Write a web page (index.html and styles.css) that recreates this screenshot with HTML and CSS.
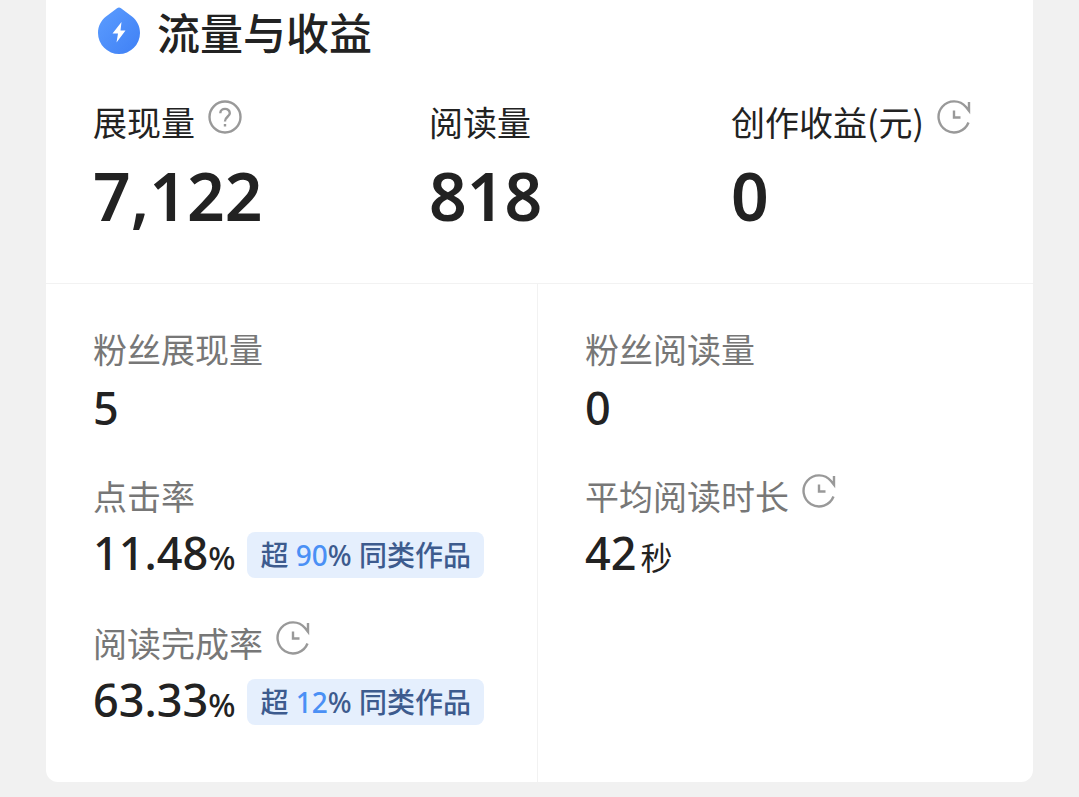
FILE: index.html
```html
<!DOCTYPE html>
<html lang="zh-CN">
<head>
    <meta charset="UTF-8">
    <meta name="viewport" content="width=device-width, initial-scale=1.0">
    <title>流量与收益</title>
    <link rel="stylesheet" href="styles.css">
</head>
<body>

<!-- shared icons -->
<svg class="sprite" aria-hidden="true">
    <symbol id="clock" viewBox="0 0 34 34">
        <path d="M31.500 22.500A15.500 15.500 0 1 1 29 7L32 10.800V2M17 10.500V17.500H23.500"/>
    </symbol>
    <symbol id="help" viewBox="0 0 34 34">
        <circle cx="17" cy="17" r="15.500"/>
        <path d="M12.300 13.200C12.300 7.500 21.800 7.400 21.800 13.200C21.800 16.600 17 16.500 17 21.500M17 24V26.500"/>
    </symbol>
</svg>

<main class="card">
    <h1 class="title">
        <svg class="logo" viewBox="0 0 42 48" aria-hidden="true">
            <defs>
                <linearGradient id="drop" x1="0" y1="0" x2="1" y2="1">
                    <stop offset="0" stop-color="#5c9dff"/>
                    <stop offset="1" stop-color="#3f80f5"/>
                </linearGradient>
            </defs>
            <path fill="url(#drop)" d="M19 1.200Q21 -.4 23 1.200L34 9.500C39 13.500 42 19 42 26A21 21 0 0 1 0 26C0 19 3 13.500 8 9.500Z"/>
            <path fill="#fff" d="M23.500 15L14.500 26.500H20L18.500 35.500L27.500 23.500H22.500Z"/>
        </svg>
        流量与收益
    </h1>

    <!-- totals -->
    <section class="totals">
        <div class="total">
            <div class="label">展现量 <button class="tip" aria-label="说明"><svg><use href="#help"/></svg></button></div>
            <div class="number">7,122</div>
        </div>
        <div class="total">
            <div class="label">阅读量</div>
            <div class="number">818</div>
        </div>
        <div class="total">
            <div class="label">创作收益(元) <button class="tip" aria-label="更新时间"><svg><use href="#clock"/></svg></button></div>
            <div class="number">0</div>
        </div>
    </section>

    <!-- details -->
    <section class="details">
        <div class="column">
            <div class="item">
                <div class="label">粉丝展现量</div>
                <div class="value">5</div>
            </div>
            <div class="item">
                <div class="label">点击率</div>
                <div class="value"><span>11.48<span class="percent">%</span></span> <span class="badge">超 <b>90</b>% 同类作品</span></div>
            </div>
            <div class="item">
                <div class="label">阅读完成率 <button class="tip" aria-label="更新时间"><svg><use href="#clock"/></svg></button></div>
                <div class="value"><span>63.33<span class="percent">%</span></span> <span class="badge">超 <b>12</b>% 同类作品</span></div>
            </div>
        </div>
        <div class="column">
            <div class="item">
                <div class="label">粉丝阅读量</div>
                <div class="value">0</div>
            </div>
            <div class="item">
                <div class="label">平均阅读时长 <button class="tip" aria-label="更新时间"><svg><use href="#clock"/></svg></button></div>
                <div class="value"><span>42<span class="unit">秒</span></span></div>
            </div>
        </div>
    </section>
</main>

</body>
</html>
```
FILE: styles.css
```css
* {
    box-sizing: border-box;
}
body {
    margin: 0;
    padding: 0 46px 16px;
    background-color: #f1f1f1;
    color: #222;
    font-family: "Noto Sans", "Noto Sans CJK SC", sans-serif;
}
.sprite {
    display: none;
}
.card {
    background-color: #fff;
    border-radius: 0 0 12px 12px;
}
.title {
    display: flex;
    align-items: center;
    gap: 17px;
    margin: 0;
    padding: 0 52px;
    height: 62px;
    font-family: "Noto Sans CJK SC", sans-serif;
    font-size: 43px;
    font-weight: 500;
    line-height: 62px;
}
.logo {
    width: 42px;
    height: 48px;
}
.totals {
    display: grid;
    grid-template-columns: 336fr 302fr 302fr;
    padding: 36px 0 48px 47px;
    border-bottom: 1px solid #f2f2f2;
}
.label {
    display: flex;
    align-items: center;
    gap: 13px;
    height: 48px;
    font-family: "Noto Sans CJK SC", sans-serif;
    font-size: 34px;
    line-height: 48px;
    white-space: nowrap;
}
.tip {
    width: 34px;
    height: 34px;
    margin: 0 0 10px;
    padding: 0;
    border: 0;
    background: none;
    cursor: pointer;
}
.tip svg {
    display: block;
    width: 34px;
    height: 34px;
    fill: none;
    stroke: #999;
    stroke-width: 2.4;
}
.number {
    margin-top: 9px;
    font-size: 66px;
    font-weight: 600;
    line-height: 80px;
}
.details {
    display: grid;
    grid-template-columns: 491fr 496fr;
}
.column {
    padding: 41px 0 52px 47px;
}
.column + .column {
    border-left: 1px solid #f2f2f2;
}
.item + .item {
    margin-top: 36px;
}
.details .label {
    color: #777;
}
.value {
    display: flex;
    align-items: center;
    gap: 12px;
    height: 56px;
    margin-top: 7px;
    font-size: 45px;
    font-weight: 500;
    line-height: 56px;
    white-space: nowrap;
}
.percent {
    font-size: 32px;
}
.unit {
    margin-left: 4px;
    font-size: 32px;
    font-weight: 400;
}
.badge {
    padding: 0 13px;
    border-radius: 8px;
    background-color: #e5effd;
    color: #3d5b8e;
    font-size: 28px;
    font-weight: 500;
    line-height: 46px;
}
.badge b {
    color: #4a90f5;
    font-weight: 500;
}
```
